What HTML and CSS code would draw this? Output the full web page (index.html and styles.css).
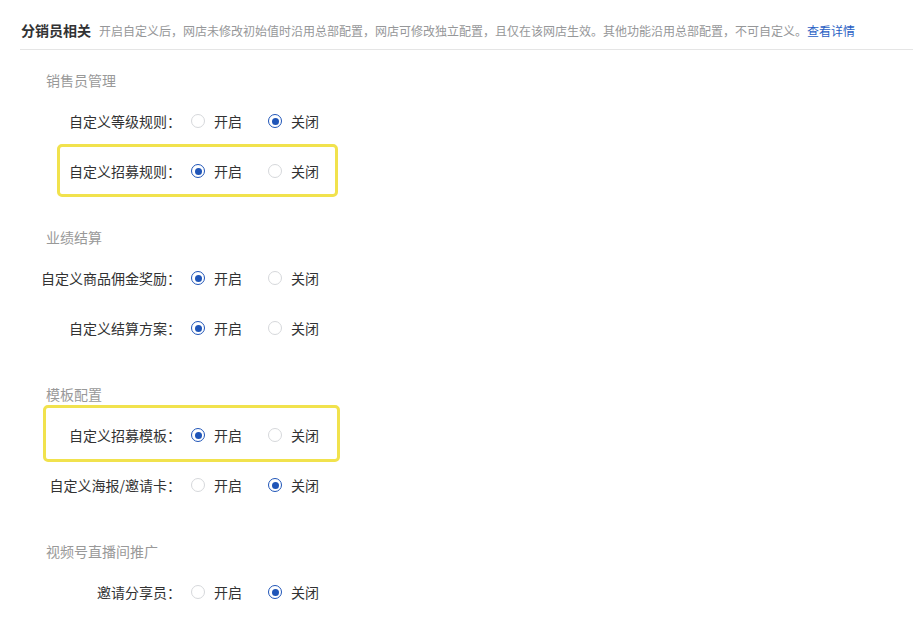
FILE: index.html
```html
<!DOCTYPE html>
<html lang="zh-cn">
<head>
<meta charset="utf-8">
<title>分销员相关</title>
<link rel="stylesheet" href="styles.css">
</head>
<body>
<div class="panel">
	<div class="panel-head">
		<span class="panel-title">分销员相关</span>
		<span class="panel-desc">开启自定义后，网店未修改初始值时沿用总部配置，网店可修改独立配置，且仅在该网店生效。其他功能沿用总部配置，不可自定义。<a class="link" href="#detail">查看详情</a></span>
	</div>

	<div class="group">
		<div class="group-title">销售员管理</div>
		<div class="row">
			<span class="row-label">自定义等级规则：</span>
			<label class="radio"><span class="radio-dot"></span>开启</label>
			<label class="radio checked"><span class="radio-dot"></span>关闭</label>
		</div>
		<div class="row mark mark-1">
			<span class="row-label">自定义招募规则：</span>
			<label class="radio checked"><span class="radio-dot"></span>开启</label>
			<label class="radio"><span class="radio-dot"></span>关闭</label>
		</div>
	</div>

	<div class="group">
		<div class="group-title">业绩结算</div>
		<div class="row">
			<span class="row-label">自定义商品佣金奖励：</span>
			<label class="radio checked"><span class="radio-dot"></span>开启</label>
			<label class="radio"><span class="radio-dot"></span>关闭</label>
		</div>
		<div class="row">
			<span class="row-label">自定义结算方案：</span>
			<label class="radio checked"><span class="radio-dot"></span>开启</label>
			<label class="radio"><span class="radio-dot"></span>关闭</label>
		</div>
	</div>

	<div class="group">
		<div class="group-title">模板配置</div>
		<div class="row mark mark-2">
			<span class="row-label">自定义招募模板：</span>
			<label class="radio checked"><span class="radio-dot"></span>开启</label>
			<label class="radio"><span class="radio-dot"></span>关闭</label>
		</div>
		<div class="row">
			<span class="row-label">自定义海报/邀请卡：</span>
			<label class="radio"><span class="radio-dot"></span>开启</label>
			<label class="radio checked"><span class="radio-dot"></span>关闭</label>
		</div>
	</div>

	<div class="group">
		<div class="group-title">视频号直播间推广</div>
		<div class="row">
			<span class="row-label">邀请分享员：</span>
			<label class="radio"><span class="radio-dot"></span>开启</label>
			<label class="radio checked"><span class="radio-dot"></span>关闭</label>
		</div>
	</div>
</div>
</body>
</html>
```

FILE: styles.css
```css
* {margin:0; padding:0; box-sizing:border-box;}
body {background:#fff; font-family:"PingFang SC", "Noto Sans CJK SC", sans-serif; font-size:14px; color:#323233;}

.panel {padding:0 0 0 20px;}
.panel-head {display:flex; align-items:baseline; padding:20px 0 8px 1px; border-bottom:1px solid #e5e5e5; line-height:20px;}
.panel-title {font-size:14px; font-weight:bold; color:#323233;}
.panel-desc {margin-left:8px; font-size:12px; color:#969799;}
.link {color:#2a5fc4; text-decoration:none;}

.group {display:flex; flex-direction:column; gap:18px; padding-left:21px; margin-top:20px;}
.group + .group {margin-top:40px;}
.group-title {padding-left:5px; line-height:20px; color:#999; margin-bottom:-3px;}

.row {display:flex; align-items:center; height:32px; position:relative;}
.row-label {width:140px; margin-right:10px; text-align:right; white-space:nowrap;}

.radio {display:flex; align-items:center; margin-right:26px; cursor:pointer;}
.radio-dot {width:14px; height:14px; margin-right:9px; border:1px solid #d6d8db; border-radius:50%; display:flex; align-items:center; justify-content:center;}
.radio.checked .radio-dot {border-color:#1f55b8;}
.radio.checked .radio-dot::after {content:""; width:7px; height:7px; border-radius:50%; background:#1f55b8;}

/* yellow marker boxes over the rows */
.mark::after {content:""; box-sizing:border-box; position:absolute; border:3px solid #f1e24d; border-radius:5px; pointer-events:none;}
.mark-1::after {left:16px; top:-11px; width:281px; height:53px;}
.mark-2::after {left:2px; top:-14px; width:297px; height:57px;}
```
